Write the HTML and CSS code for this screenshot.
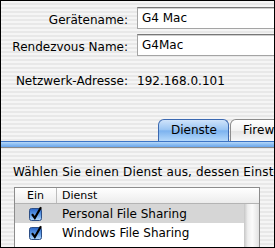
FILE: index.html
```html
<!DOCTYPE html>
<html lang="de">
<head>
    <meta charset="UTF-8">
    <title>Sharing</title>
    <link rel="stylesheet" href="styles.css">
</head>
<body>
    <div class="window">
        <div class="identity">
            <div class="row">
                <label class="label">Gerätename:</label>
                <div class="field">G4 Mac</div>
            </div>
            <div class="row">
                <label class="label">Rendezvous Name:</label>
                <div class="field">G4Mac</div>
            </div>
            <div class="row address">
                <span class="label">Netzwerk-Adresse:</span>
                <span class="value">192.168.0.101</span>
            </div>
        </div>

        <div class="tabs">
            <div class="tab selected">Dienste</div>
            <div class="tab">Firewall</div>
        </div>
        <div class="tab-rule"></div>

        <div class="pane">
            <p class="hint">Wählen Sie einen Dienst aus, dessen Einstellungen Sie ändern möchten.</p>
            <div class="service-table">
                <div class="table-head">
                    <div class="col-on">Ein</div>
                    <div class="col-name">Dienst</div>
                </div>
                <div class="table-body">
                    <div class="rows">
                        <div class="service-row highlighted">
                            <div class="col-on">
                                <svg class="checkbox" width="16" height="16" viewBox="0 0 16 16">
                                    <defs>
                                        <linearGradient id="cb1" x1="0" y1="0" x2="0" y2="1">
                                            <stop offset="0" stop-color="#2a66c8"/>
                                            <stop offset="0.5" stop-color="#5e9ae6"/>
                                            <stop offset="1" stop-color="#b4dafc"/>
                                        </linearGradient>
                                    </defs>
                                    <rect x="1.5" y="2.5" width="12" height="12" rx="2" fill="url(#cb1)" stroke="#2d4f86"/>
                                    <path d="M4 8.2 L6.8 12 L13 1.2" fill="none" stroke="#000" stroke-width="2.2"/>
                                </svg>
                            </div>
                            <div class="col-name">Personal File Sharing</div>
                        </div>
                        <div class="service-row">
                            <div class="col-on">
                                <svg class="checkbox" width="16" height="16" viewBox="0 0 16 16">
                                    <rect x="1.5" y="2.5" width="12" height="12" rx="2" fill="url(#cb1)" stroke="#2d4f86"/>
                                    <path d="M4 8.2 L6.8 12 L13 1.2" fill="none" stroke="#000" stroke-width="2.2"/>
                                </svg>
                            </div>
                            <div class="col-name">Windows File Sharing</div>
                        </div>
                    </div>
                    <div class="scroll-track"></div>
                </div>
            </div>
        </div>
    </div>
</body>
</html>
```

FILE: styles.css
```css
* {
    margin: 0;
    padding: 0;
    box-sizing: border-box;
}

body {
    font-family: "DejaVu Sans", "Noto Sans", sans-serif;
    font-size: 12px;
    color: #000;
    background: #fff;
}

.window {
    width: 275px;
    height: 248px;
    border: 1px solid #000;
    overflow: hidden;
    background: repeating-linear-gradient(to bottom, #f5f5f5 0, #f5f5f5 2px, #e8e8e8 2px, #e8e8e8 4px);
}

/* top block: name fields */
.identity {
    padding-top: 6px;
}

.row {
    display: flex;
    align-items: center;
    gap: 9px;
    height: 22px;
}

.row + .row {
    margin-top: 5px;
}

.row.address {
    margin-top: 15px;
    height: 16px;
}

.label {
    flex: 0 0 127px;
    text-align: right;
    padding-top: 3px;
    white-space: nowrap;
}

.value {
    padding-top: 3px;
    white-space: nowrap;
}

.field {
    flex: 0 0 170px;
    height: 22px;
    padding: 3px 0 0 4px;
    background: #fff;
    border: 1px solid #a4a4a4;
    border-top-color: #777;
    box-shadow: inset 0 1px 0 #cfcfcf;
    white-space: nowrap;
}

/* tabs */
.tabs {
    display: flex;
    gap: 1px;
    margin-top: 32px;
    padding-left: 157px;
    height: 22px;
}

.tab {
    flex: 0 0 auto;
    height: 22px;
    padding: 0 12px;
    line-height: 21px;
    text-align: center;
    white-space: nowrap;
    border: 1px solid #8c8c8c;
    border-bottom: none;
    border-radius: 6px 6px 0 0;
    background: linear-gradient(to bottom, #ffffff 0%, #f2f2f2 50%, #e3e3e3 51%, #f8f8f8 100%);
}

.tab.selected {
    width: 71px;
    border-color: #3b68b0;
    background: linear-gradient(to bottom, #cfe3fa 0%, #9cc6f3 45%, #7db3ef 52%, #b5d9fb 100%);
}

.tab-rule {
    height: 7px;
    background: linear-gradient(to bottom, #3c74c6 0, #3c74c6 1px, #b8d8f8 1px, #93c2f3 3px, #6aa6ec 6px);
    border-bottom: 1px solid #8a8a8a;
}

/* content pane */
.pane {
    padding-top: 16px;
}

.hint {
    padding-left: 12px;
    line-height: 16px;
    letter-spacing: 0.15px;
    white-space: nowrap;
}

.service-table {
    margin: 7px 0 0 13px;
    width: 246px;
    border: 1px solid #8c8c8c;
    border-bottom: none;
    background: #fff;
}

.table-head {
    display: flex;
    height: 16px;
    font-size: 11px;
    line-height: 15px;
    background: linear-gradient(to bottom, #ffffff, #ececec);
    border-bottom: 1px solid #b4b4b4;
}

.table-head .col-on {
    flex: 0 0 42px;
    text-align: center;
    border-right: 1px solid #bdbdbd;
}

.table-head .col-name {
    padding-left: 5px;
}

.table-body {
    display: flex;
    height: 60px;
}

.rows {
    flex: 1;
}

.service-row {
    display: flex;
    align-items: center;
    height: 19px;
}

.service-row.highlighted {
    background: #d6d6d6;
}

.service-row .col-on {
    flex: 0 0 42px;
    display: flex;
    justify-content: center;
}

.service-row .col-name {
    padding-left: 5px;
    white-space: nowrap;
}

.checkbox {
    display: block;
}

.scroll-track {
    flex: 0 0 15px;
    background: linear-gradient(to right, #c6c6c6 0, #eeeeee 25%, #fbfbfb 55%, #e2e2e2 100%);
}
```
